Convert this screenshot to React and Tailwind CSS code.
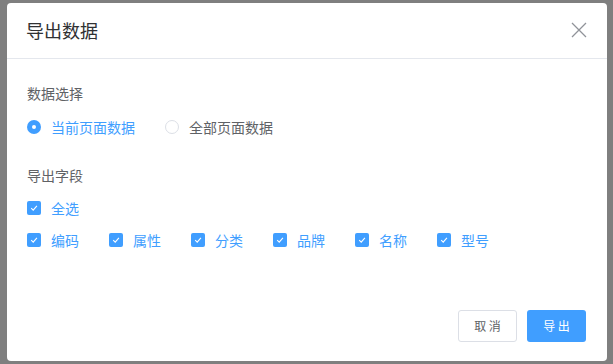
import React from 'react';

const fields = ['编码', '属性', '分类', '品牌', '名称', '型号'];

const CheckBox = ({ label, className = '' }) => (
  <label className={`flex items-center h-[20px] ${className}`}>
    <span className="w-[14px] h-[14px] rounded-[2px] bg-[#409eff] flex items-center justify-center shrink-0">
      <svg width="10" height="10" viewBox="0 0 10 10" fill="none">
        <path d="M2.2 5.2 L4.2 7.1 L7.9 2.9" stroke="#fff" strokeWidth="1.1" />
      </svg>
    </span>
    <span className="ml-[10px] text-[14px] leading-[20px] text-[#409eff]">{label}</span>
  </label>
);

const Radio = ({ label, checked }) => (
  <label className="flex items-center h-[20px] mr-[30px]">
    {checked ? (
      <span className="w-[14px] h-[14px] rounded-full bg-[#409eff] flex items-center justify-center">
        <span className="w-[4px] h-[4px] rounded-full bg-white" />
      </span>
    ) : (
      <span className="w-[14px] h-[14px] rounded-full border border-[#dcdfe6] bg-white" />
    )}
    <span className={`ml-[10px] text-[14px] leading-[20px] ${checked ? 'text-[#409eff]' : 'text-[#606266]'}`}>
      {label}
    </span>
  </label>
);

export default function App() {
  return (
    <div
      className="w-[613px] h-[364px] bg-[#7f7f7f] pl-[7px] pt-[3px] overflow-hidden"
      style={{ fontFamily: '"Noto Sans CJK SC", "Noto Sans", sans-serif' }}
    >
      <div className="w-[600px] h-[358px] bg-white rounded-[4px] flex flex-col">
        {/* Header */}
        <div className="h-[56px] flex items-center justify-between pl-[19px] pr-[20px] border-b border-[#e4e7ed] shrink-0">
          <span className="text-[18px] leading-[24px] text-[#303133] mt-[-1px]">导出数据</span>
          <svg width="16" height="16" viewBox="0 0 16 16" fill="none" className="mt-[-1px]">
            <path d="M1 1 L15 15 M15 1 L1 15" stroke="#909399" strokeWidth="1.3" />
          </svg>
        </div>

        {/* Body */}
        <div className="pl-[20px] pt-[24px]">
          <div className="text-[14px] leading-[20px] text-[#606266]">数据选择</div>
          <div className="flex mt-[14px]">
            <Radio label="当前页面数据" checked />
            <Radio label="全部页面数据" />
          </div>

          <div className="text-[14px] leading-[20px] text-[#606266] mt-[28px]">导出字段</div>
          <CheckBox label="全选" className="mt-[13px]" />
          <div className="flex mt-[12px]">
            {fields.map((f) => (
              <CheckBox key={f} label={f} className="w-[82px]" />
            ))}
          </div>
        </div>

        {/* Footer */}
        <div className="mt-auto flex justify-end gap-[10px] pr-[21px] pb-[19px]">
          <button className="h-[32px] w-[59px] rounded-[3px] border border-[#dcdfe6] bg-white text-[12px] text-[#606266]">
            取 消
          </button>
          <button className="h-[32px] w-[59px] rounded-[3px] bg-[#409eff] text-[12px] text-white">
            导 出
          </button>
        </div>
      </div>
    </div>
  );
}
